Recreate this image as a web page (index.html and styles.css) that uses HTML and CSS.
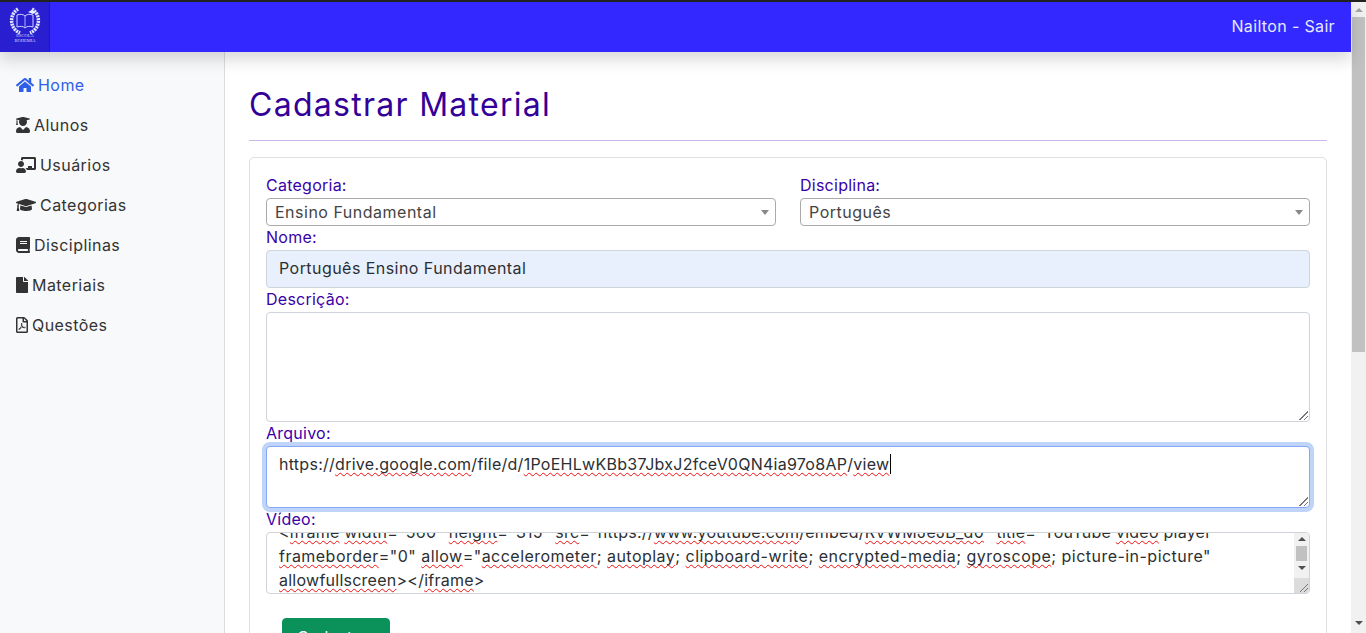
FILE: index.html
```html
<!DOCTYPE html>
<html lang="pt-BR">
<head>
<meta charset="utf-8">
<title>Cadastrar Material</title>
<link rel="stylesheet" href="styles.css">
</head>
<body>
<div class="window">
  <div class="page">
    <nav class="navbar">
      <a class="brand" href="#">
        <svg class="logo" viewBox="0 0 40 40">
          <path d="M13 2A13.500 13.500 0 0 0 15 26M27 2A13.500 13.500 0 0 1 25 26" fill="none" stroke="#dfe4ff" stroke-width="3.500" stroke-dasharray="2 .8"/>
          <path d="M12 8c3-1 6-1 8 1 2-2 5-2 8-1v12c-3-1-6-1-8 1-2-2-5-2-8-1z" fill="none" stroke="#cfd6ff" stroke-width="1"/>
          <path d="M20 9v11" stroke="#cfd6ff" stroke-width=".8"/>
          <path d="M27 3l4 2-3 2-5-2z" fill="#eef1ff"/>
          <text x="20" y="29.500" class="logo-text">ESCOLA</text>
          <text x="20" y="34.500" class="logo-text">BOHEMIA</text>
        </svg>
      </a>
      <a class="user" href="#">Nailton - Sair</a>
    </nav>
    <div class="main">
      <aside class="sidebar">
        <a class="side-link active" href="#">
          <svg class="ico" viewBox="0 0 576 512"><path d="M280.370 148.260L96 300.110V464a16 16 0 0 0 16 16l112.060-.29a16 16 0 0 0 15.920-16V368a16 16 0 0 1 16-16h64a16 16 0 0 1 16 16v95.640a16 16 0 0 0 16 16.050L464 480a16 16 0 0 0 16-16V300L295.670 148.260a12.190 12.190 0 0 0-15.300 0zM571.600 251.470L488 182.560V44.050a12 12 0 0 0-12-12h-56a12 12 0 0 0-12 12v72.610L318.470 43a48 48 0 0 0-61 0L4.340 251.470a12 12 0 0 0-1.600 16.900l25.500 31A12 12 0 0 0 45.150 301l235.220-193.740a12.190 12.190 0 0 1 15.300 0L530.900 301a12 12 0 0 0 16.900-1.600l25.500-31a12 12 0 0 0-1.700-16.930z"/></svg>
          Home
        </a>
        <a class="side-link" href="#">
          <svg class="ico" viewBox="0 0 448 512"><path d="M319.400 320.600L224 416l-95.400-95.400C57.100 323.700 0 382.200 0 454.400v9.600c0 26.500 21.500 48 48 48h352c26.500 0 48-21.500 48-48v-9.600c0-72.200-57.100-130.700-128.600-133.800zM13.600 79.800l6.400 1.500v58.400c-7 4.200-12 11.500-12 20.300 0 8.400 4.600 15.400 11.100 19.700L3.500 242c-1.700 6.900 2.100 14 7.600 14h41.800c5.500 0 9.300-7.100 7.600-14l-15.600-62.300C51.400 175.400 56 168.400 56 160c0-8.800-5-16.100-12-20.300V87.100l66 15.900c-8.600 17.200-14 36.400-14 57 0 70.700 57.300 128 128 128s128-57.300 128-128c0-20.600-5.300-39.800-14-57l96.300-23.200c18.200-4.400 18.200-27.100 0-31.500l-190.400-46c-13-3.100-26.700-3.100-39.700 0L13.600 48.200c-18.100 4.400-18.100 27.200 0 31.600z"/></svg>
          Alunos
        </a>
        <a class="side-link" href="#">
          <svg class="ico" viewBox="0 0 640 512"><path d="M208 352c-2.390 0-4.780.35-7.060 1.090C187.980 357.300 174.350 360 160 360c-14.350 0-27.980-2.700-40.950-6.910-2.280-.74-4.660-1.090-7.050-1.090C49.940 352-.33 402.480 0 464.620.14 490.880 21.730 512 48 512h224c26.270 0 47.860-21.120 48-47.380.33-62.140-49.940-112.620-112-112.620zm-48-32c53.020 0 96-42.980 96-96s-42.980-96-96-96-96 42.980-96 96 42.980 96 96 96zM592 0H208c-26.470 0-48 22.250-48 49.590V96c23.420 0 45.100 6.780 64 17.800V64h352v288h-64v-64H384v64h-76.240c19.100 16.690 33.120 38.730 39.690 64H592c26.470 0 48-22.250 48-49.590V49.590C640 22.250 618.470 0 592 0z"/></svg>
          Usuários
        </a>
        <a class="side-link" href="#">
          <svg class="ico" viewBox="0 0 640 512"><path d="M622.340 153.200L343.400 67.500c-15.200-4.670-31.600-4.670-46.790 0L17.660 153.200c-23.540 7.230-23.540 38.360 0 45.590l48.630 14.940c-10.670 13.190-17.230 29.280-17.880 46.900C38.780 266.150 32 276.110 32 288c0 10.780 5.680 19.850 13.860 25.650L20.330 428.530C18.110 438.520 25.710 448 35.940 448h56.110c10.240 0 17.840-9.480 15.620-19.470L82.140 313.650C90.320 307.850 96 298.780 96 288c0-11.570-6.470-21.250-15.660-26.870.76-15.020 8.440-28.300 20.690-36.720L296.600 284.500c9.060 2.780 26.440 6.250 46.790 0l278.950-85.700c23.550-7.240 23.550-38.360 0-45.600zM352.790 315.090c-28.530 8.760-52.840 3.920-65.590 0l-145.020-44.550L128 384c0 35.350 85.960 64 192 64s192-28.650 192-64l-14.180-113.470-145.030 44.560z"/></svg>
          Categorias
        </a>
        <a class="side-link" href="#">
          <svg class="ico" viewBox="0 0 448 512"><path d="M448 360V24c0-13.300-10.700-24-24-24H96C43 0 0 43 0 96v320c0 53 43 96 96 96h328c13.300 0 24-10.700 24-24v-16c0-7.500-3.500-14.300-8.900-18.700-4.200-15.400-4.200-59.300 0-74.700 5.400-4.300 8.900-11.100 8.900-18.600zM128 134c0-3.300 2.700-6 6-6h212c3.300 0 6 2.700 6 6v20c0 3.300-2.700 6-6 6H134c-3.300 0-6-2.700-6-6v-20zm0 64c0-3.300 2.700-6 6-6h212c3.300 0 6 2.700 6 6v20c0 3.300-2.700 6-6 6H134c-3.300 0-6-2.700-6-6v-20zm253.400 250H96c-17.700 0-32-14.300-32-32 0-17.600 14.400-32 32-32h285.400c-1.900 17.100-1.900 46.900 0 64z"/></svg>
          Disciplinas
        </a>
        <a class="side-link" href="#">
          <svg class="ico" viewBox="0 0 384 512"><path d="M224 136V0H24C10.700 0 0 10.700 0 24v464c0 13.300 10.700 24 24 24h336c13.300 0 24-10.700 24-24V160H248c-13.200 0-24-10.800-24-24zm160-14.100v6.100H256V0h6.100c6.400 0 12.500 2.500 17 7l97.900 98c4.500 4.500 7 10.600 7 16.900z"/></svg>
          Materiais
        </a>
        <a class="side-link" href="#">
          <svg class="ico" viewBox="0 0 384 512"><path d="M369.900 97.900L286 14C277 5 264.800-.1 252.100-.1H48C21.500 0 0 21.500 0 48v416c0 26.500 21.500 48 48 48h288c26.500 0 48-21.500 48-48V131.900c0-12.700-5.100-25-14.100-34zM332.100 128H256V51.900l76.100 76.100zM48 464V48h160v104c0 13.300 10.700 24 24 24h104v288H48zm250.200-143.700c-12.200-12-47-8.700-64.400-6.500-17.200-10.500-28.700-25-36.800-46.300 3.900-16.100 10.100-40.600 5.400-56-4.200-26.200-37.800-23.600-42.600-5.900-4.400 16.100-.4 38.500 7 67.100-10 23.900-24.900 56-35.400 74.400-20 10.300-47 26.200-51 46.200-3.300 15.800 26 55.200 76.100-31.200 22.400-7.400 46.800-16.500 68.400-20.100 18.900 10.200 41 17 55.800 17 25.500 0 28-28.200 17.500-38.700zm-198.100 77.800c5.100-13.700 24.500-29.500 30.400-35-19 30.300-30.400 35.700-30.400 35zm81.600-190.600c7.400 0 6.700 32.100 1.800 40.800-4.400-13.900-4.300-40.800-1.800-40.800zm-24.400 136.600c9.700-16.900 18-37 24.700-54.700 8.300 15.100 18.900 27.200 30.100 35.500-20.800 4.300-38.900 13.100-54.800 19.200zm131.600-5s-5 6-37.300-7.800c35.100-2.600 40.900 5.400 37.300 7.800z"/></svg>
          Questões
        </a>
      </aside>
      <main class="content">
        <h1 class="title">Cadastrar Material</h1>
        <hr class="rule">
        <form class="card">
          <div class="row">
            <div>
              <label class="lbl">Categoria:</label>
              <div class="select">Ensino Fundamental</div>
            </div>
            <div>
              <label class="lbl">Disciplina:</label>
              <div class="select">Português</div>
            </div>
          </div>
          <label class="lbl">Nome:</label>
          <div class="field filled">Português Ensino Fundamental</div>
          <label class="lbl">Descrição:</label>
          <div class="field area tall"></div>
          <label class="lbl">Arquivo:</label>
          <div class="field area focus">https://<span class="sp">drive.google.com</span>/file/d/<span class="sp">1PoEHLwKBb37JbxJ2fceV0QN4ia97o8AP</span>/<span class="sp">view</span><span class="caret"></span></div>
          <label class="lbl">Vídeo:</label>
          <div class="field area video">
            <div class="video-text">
              <div class="line">&lt;<span class="sp">iframe</span> <span class="sp">width</span>="560" <span class="sp">height</span>="315" <span class="sp">src</span>="https://<span class="sp">www.youtube.com</span>/embed/<span class="sp">RVWMJeJB_d0</span>" <span class="sp">title</span>="YouTube <span class="sp">video</span> player"</div>
              <div class="line wide"><span class="sp">frameborder</span>="0" <span class="sp">allow</span>="<span class="sp">accelerometer</span>; <span class="sp">autoplay</span>; <span class="sp">clipboard-write</span>; <span class="sp">encrypted-media</span>; <span class="sp">gyroscope</span>; picture-in-picture"</div>
              <div class="line"><span class="sp">allowfullscreen</span>&gt;&lt;/<span class="sp">iframe</span>&gt;</div>
            </div>
            <div class="mini-bar">
              <span class="arr up"></span>
              <span class="mini-thumb"></span>
              <span class="arr down"></span>
            </div>
          </div>
          <button class="btn" type="button">Cadastrar</button>
        </form>
      </main>
    </div>
  </div>
  <div class="scrollbar">
    <span class="arr up"></span>
    <span class="thumb"></span>
    <span class="arr down"></span>
  </div>
</div>
</body>
</html>
```
FILE: styles.css
```css
* {
  box-sizing: border-box;
}

html, body {
  margin: 0;
  height: 633px;
  overflow: hidden;
}

body {
  font-family: "Inter", "Noto Sans", sans-serif;
  font-size: 16px;
  line-height: 24px;
  color: #2b2f33;
  background: #fff;
}

a {
  text-decoration: none;
}

.window {
  display: flex;
  height: 633px;
  border-top: 2px solid #222;
}

.page {
  flex: 1;
  min-width: 0;
  display: flex;
  flex-direction: column;
}

/* top bar */
.navbar {
  position: relative;
  z-index: 2;
  flex: none;
  height: 50px;
  display: flex;
  justify-content: space-between;
  align-items: center;
  background: #3328ff;
  box-shadow: 0 8px 16px rgba(0,0,0,.15);
}

.brand {
  width: 50px;
  height: 50px;
  display: flex;
  align-items: center;
  justify-content: center;
  background: #2a1fd0;
  border-right: 1px solid #1f18a8;
}

.logo {
  width: 40px;
  height: 40px;
}

.logo-text {
  font-family: "Liberation Serif", serif;
  font-size: 4.500px;
  fill: #d5dcff;
  text-anchor: middle;
}

.user {
  color: #e6eaff;
  padding: 0 16px 2px 0;
  letter-spacing: .35px;
}

.main {
  flex: 1;
  min-height: 0;
  display: flex;
}

/* side menu */
.sidebar {
  flex: none;
  width: 225px;
  padding-top: 13px;
  background: #f8f9fa;
  border-right: 1px solid #dcdcdc;
  display: flex;
  flex-direction: column;
}

.side-link {
  height: 40px;
  padding-left: 16px;
  display: flex;
  align-items: center;
  gap: 4px;
  color: #333;
  letter-spacing: .45px;
}

.side-link.active {
  color: #2f5fe8;
}

.ico {
  height: 16px;
  flex: none;
  fill: currentColor;
}

/* form area */
.content {
  flex: 1;
  min-width: 0;
  padding: 34px 24px 0;
}

.title {
  margin: 0;
  font-size: 32px;
  line-height: 38px;
  font-weight: 400;
  letter-spacing: 1.280px;
  color: #330099;
}

.rule {
  margin: 16px 0;
  border: 0;
  border-top: 1px solid #c8b8ec;
}

.card {
  padding: 16px;
  height: 520px;
  border: 1px solid #dfdfdf;
  border-radius: 5px;
}

.row {
  display: grid;
  grid-template-columns: 1fr 1fr;
  gap: 24px;
}

.lbl {
  display: block;
  height: 24px;
  line-height: 22px;
  letter-spacing: .25px;
  color: #3a00a8;
}

.select {
  position: relative;
  height: 28px;
  padding-left: 8px;
  line-height: 26px;
  letter-spacing: .5px;
  color: #444;
  border: 1px solid #aaa;
  border-radius: 4px;
}

.select::after {
  content: "";
  position: absolute;
  right: 6px;
  top: 11px;
  border: 4px solid transparent;
  border-top: 5px solid #888;
  border-bottom: 0;
}

.field {
  padding: 5px 12px 7px;
  letter-spacing: .45px;
  border: 1px solid #ced4da;
  border-radius: 4px;
  background: #fff;
}

.filled {
  height: 38px;
  background: #e8f0fe;
}

.area {
  position: relative;
  height: 62px;
}

.area::after {
  content: "";
  position: absolute;
  right: 1px;
  bottom: 1px;
  width: 9px;
  height: 9px;
  background: linear-gradient(135deg, transparent 50%, #777 50%, #777 58%, transparent 58%, transparent 75%, #777 75%, #777 83%, transparent 83%);
}

.tall {
  height: 110px;
}

.focus {
  letter-spacing: .27px;
  border-color: #86a8f4;
  box-shadow: 0 0 0 4px #c0d4fa;
}

.sp {
  text-decoration: underline wavy #f01010 1px;
  text-underline-offset: 2px;
  text-decoration-skip-ink: none;
}

.caret {
  display: inline-block;
  width: 1px;
  height: 20px;
  margin-left: 1px;
  vertical-align: -4px;
  background: #000;
}

.video {
  padding: 0;
  overflow: hidden;
  display: flex;
}

.video-text {
  flex: 1;
  min-width: 0;
  padding: 0 0 0 12px;
  margin-top: -13px;
}

.line {
  white-space: nowrap;
  letter-spacing: .25px;
}

.line.wide {
  letter-spacing: .47px;
}

.mini-bar {
  flex: none;
  width: 15px;
  background: #f1f1f1;
  border-bottom: 15px solid #dcdcdc;
  display: flex;
  flex-direction: column;
  align-items: center;
  padding-top: 4px;
}

.mini-thumb {
  width: 11px;
  height: 15px;
  margin: 5px 0;
  background: #c1c1c1;
}

.arr {
  flex: none;
  border: 4px solid transparent;
  border-top: 0;
  border-bottom: 4px solid #505050;
}

.arr.down {
  border-top: 4px solid #505050;
  border-bottom: 0;
}

.btn {
  display: block;
  width: 108px;
  height: 38px;
  margin: 24px 0 0 16px;
  font: inherit;
  letter-spacing: .45px;
  color: #fff;
  background: #0b915a;
  border: 1px solid #0b915a;
  border-radius: 4px;
}

/* page scrollbar */
.scrollbar {
  flex: none;
  width: 15px;
  background: #f1f1f1;
  display: flex;
  flex-direction: column;
  align-items: center;
  padding-top: 6px;
}

.scrollbar .arr {
  border-bottom-color: #a3a3a3;
}

.scrollbar .arr.down {
  margin-top: 269px;
  border-top-color: #505050;
}

.thumb {
  width: 13px;
  height: 335px;
  margin-top: 5px;
  background: #c1c1c1;
}
```
